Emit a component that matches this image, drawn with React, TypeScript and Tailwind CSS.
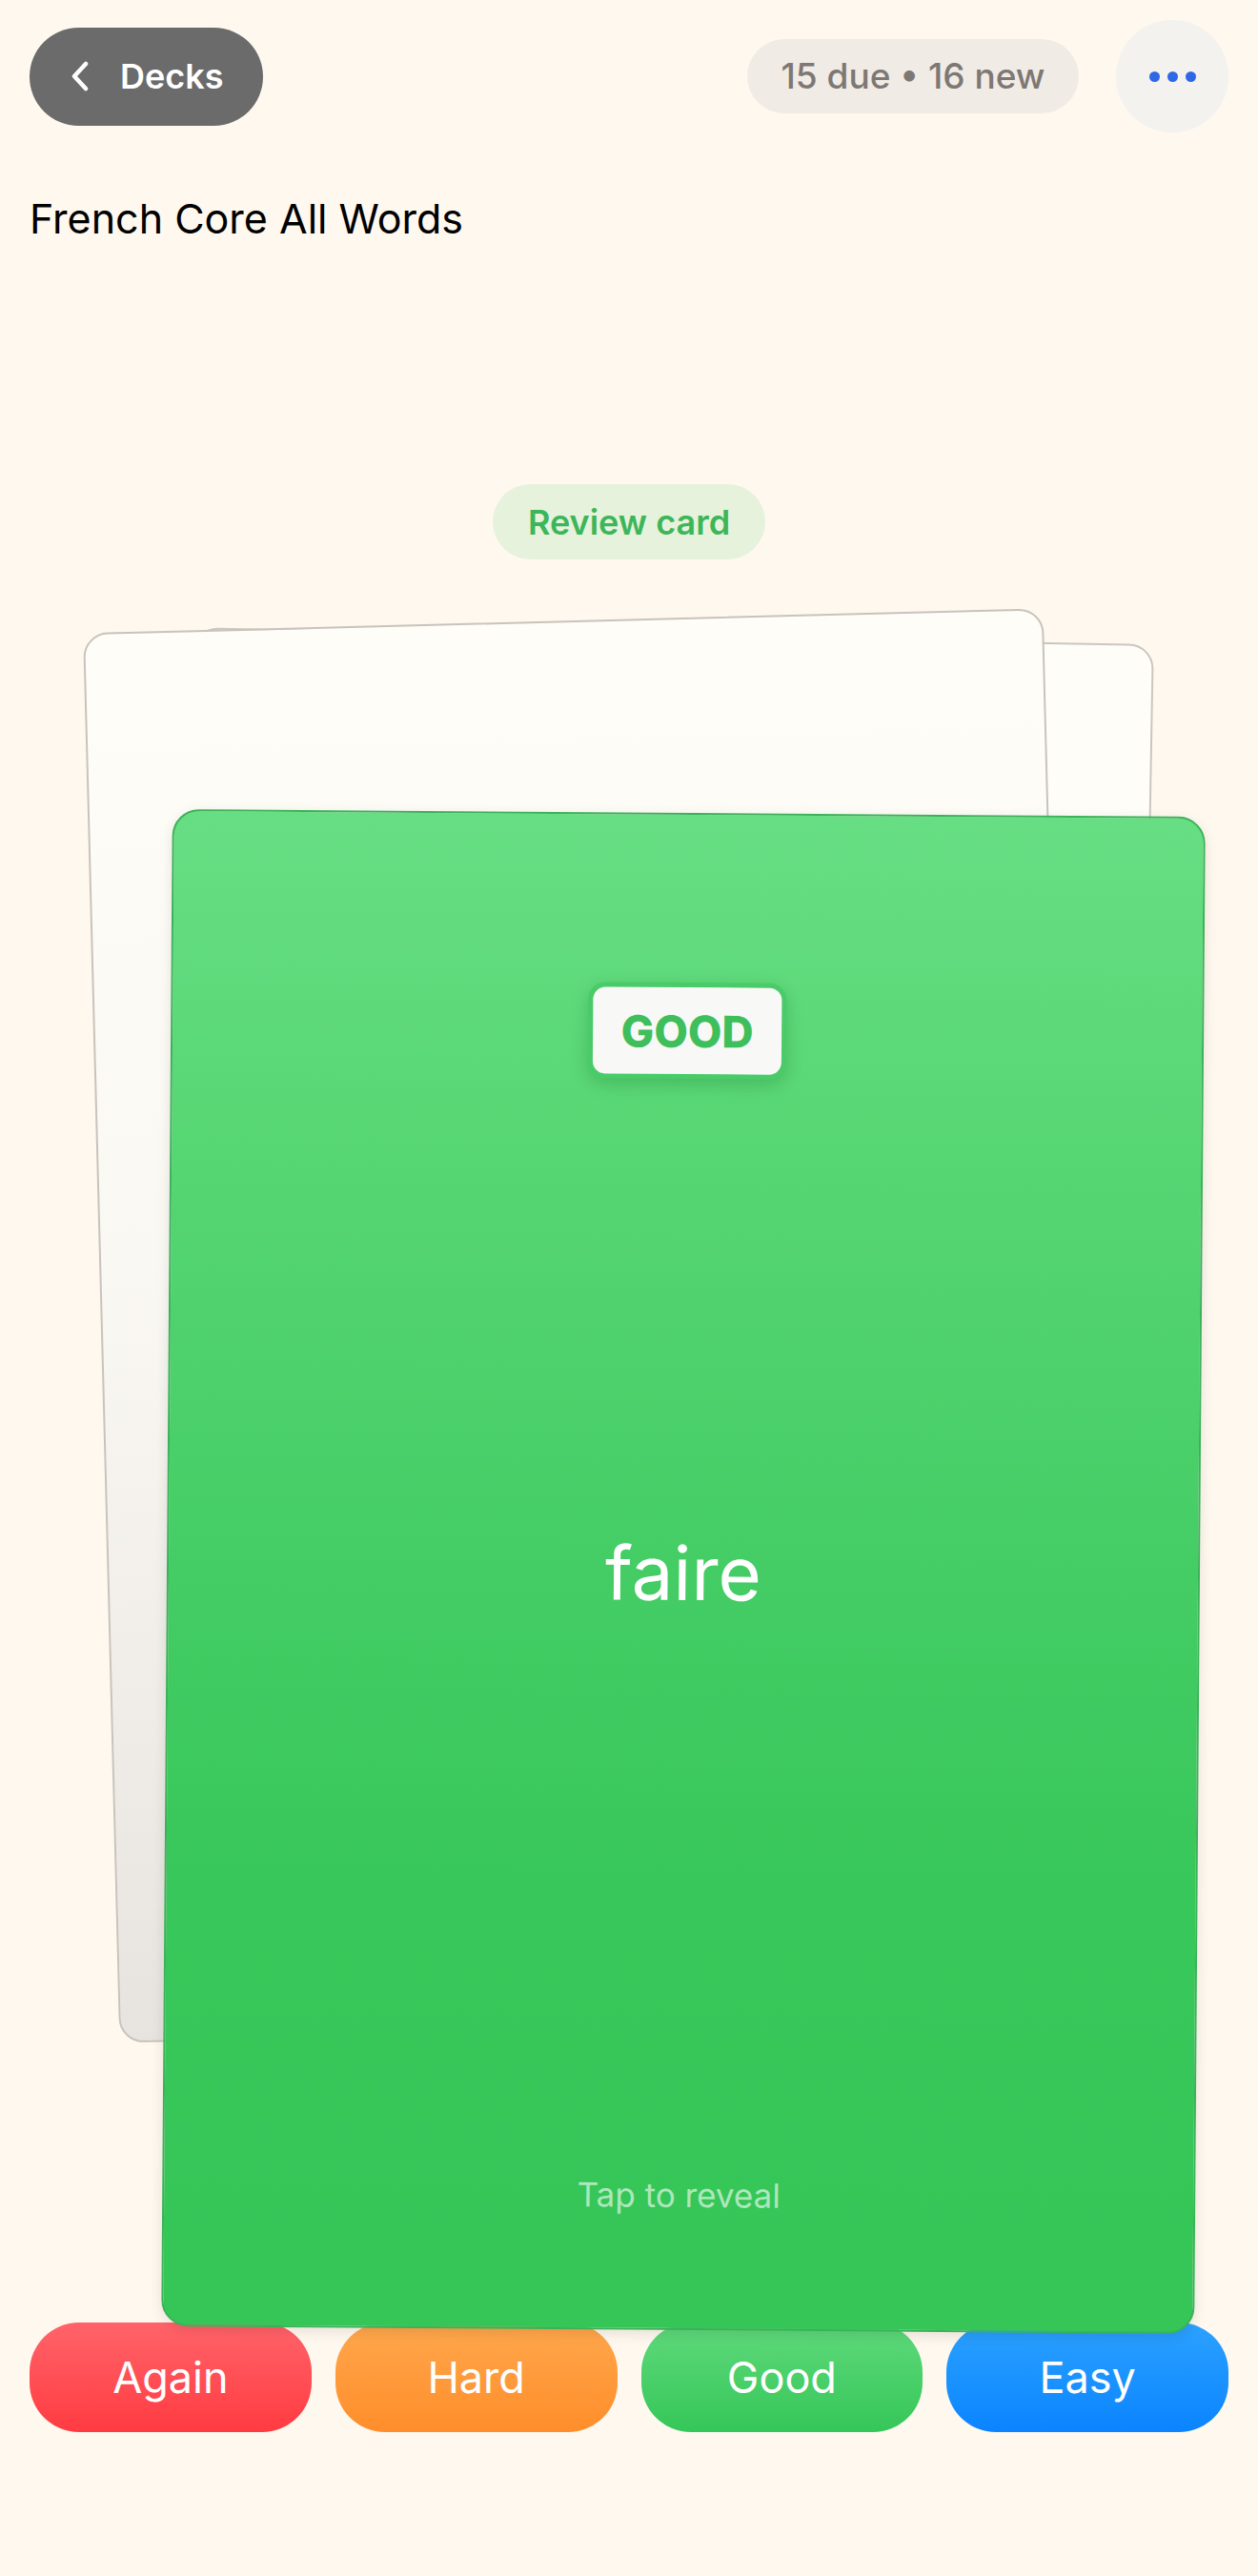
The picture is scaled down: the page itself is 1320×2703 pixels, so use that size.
import React from "react"

const font = { fontFamily: "Inter, 'Noto Sans', 'Liberation Sans', sans-serif" }

function Chevron() {
  return (
    <svg width="22" height="32" viewBox="0 0 22 32" fill="none" aria-hidden="true">
      <polyline
        points="17,3 5,16 17,29"
        stroke="white"
        strokeWidth="4.5"
        strokeLinecap="round"
        strokeLinejoin="round"
      />
    </svg>
  )
}

function Header() {
  return (
    <div className="flex items-center justify-between px-[31px] pt-[21px]">
      <button className="flex h-[103px] w-[245px] items-center gap-[31px] rounded-full bg-[#6b6b6b] pl-[42px] text-[36px] font-semibold text-white">
        <Chevron />
        <span className="leading-none">Decks</span>
      </button>
      <div className="flex items-center gap-[39px]">
        <div className="flex h-[78px] w-[348px] items-center justify-center rounded-full bg-[#f1ebe5] text-[37px] font-medium text-[#7d7874]">
          15 due • 16 new
        </div>
        <button
          aria-label="More"
          className="flex h-[118px] w-[118px] items-center justify-center gap-[8px] rounded-full bg-[#f3f2ef]"
        >
          <span className="h-[11px] w-[11px] rounded-full bg-[#2f68e6]" />
          <span className="h-[11px] w-[11px] rounded-full bg-[#2f68e6]" />
          <span className="h-[11px] w-[11px] rounded-full bg-[#2f68e6]" />
        </button>
      </div>
    </div>
  )
}

function CardStack() {
  return (
    <div className="relative h-[1850px]">
      {/* back-most card */}
      <div className="absolute left-[190px] top-[80px] h-[1480px] w-[1008px] rotate-[1deg] rounded-[26px] border-2 border-[#cbc6bf] bg-[#fffdf8]" />
      {/* middle card */}
      <div className="absolute left-[106px] top-[64px] h-[1480px] w-[1008px] rotate-[-1.48deg] rounded-[26px] border-2 border-[#c8c3bc] bg-[linear-gradient(180deg,#fffdf8_0%,#faf8f3_45%,#e7e4df_100%)]" />
      {/* front card */}
      <div className="absolute left-[175px] top-[266px] z-10 flex h-[1592px] w-[1084px] rotate-[0.42deg] flex-col items-center rounded-[28px] border-2 border-[#3cb159] bg-[linear-gradient(180deg,#67de83_0%,#57d674_22%,#44cd65_50%,#38c75a_70%,#36c658_100%)] shadow-[0_4px_14px_rgba(0,0,0,0.10)]">
        <div className="mt-[176px] flex h-[101px] w-[208px] items-center justify-center rounded-[18px] border-[5px] border-[#4acb69] bg-[#f8f8f6] shadow-[0_6px_18px_rgba(0,80,20,0.22)]">
          <span className="text-[46px] font-extrabold leading-none text-[#3ebf5c]">GOOD</span>
        </div>
        <div className="mt-[480px] text-[78px] leading-[78px] text-white">faire</div>
        <div className="mt-auto pb-[122px] text-[35px] leading-[35px] text-white/60">Tap to reveal</div>
      </div>
    </div>
  )
}

const answers = [
  { label: "Again", cls: "bg-[linear-gradient(180deg,#ff646a_0%,#ff3b41_100%)]" },
  { label: "Hard", cls: "bg-[linear-gradient(180deg,#ffa84d_0%,#ff8d2a_100%)]" },
  { label: "Good", cls: "bg-[linear-gradient(180deg,#60da7c_0%,#35c658_100%)]" },
  { label: "Easy", cls: "bg-[linear-gradient(180deg,#2ca2ff_0%,#0a84ff_100%)]" },
]

export default function App() {
  return (
    <div className="min-h-[2703px] w-full overflow-hidden bg-[#fef8ef]" style={font}>
      <Header />

      <h1 className="mt-[68px] px-[31px] text-[43px] font-normal leading-[44px] text-black">
        French Core All Words
      </h1>

      <div className="mt-[257px] flex justify-center">
        <div className="flex h-[79px] w-[286px] items-center justify-center rounded-full bg-[#e6f2dc] text-[36px] font-semibold text-[#3db65a]">
          Review card
        </div>
      </div>

      <CardStack />

      <div className="flex gap-[25px] px-[31px]">
        {answers.map((a) => (
          <button
            key={a.label}
            className={`flex h-[115px] flex-1 items-center justify-center rounded-[52px] text-[45px] font-normal text-white ${a.cls}`}
          >
            {a.label}
          </button>
        ))}
      </div>
    </div>
  )
}
